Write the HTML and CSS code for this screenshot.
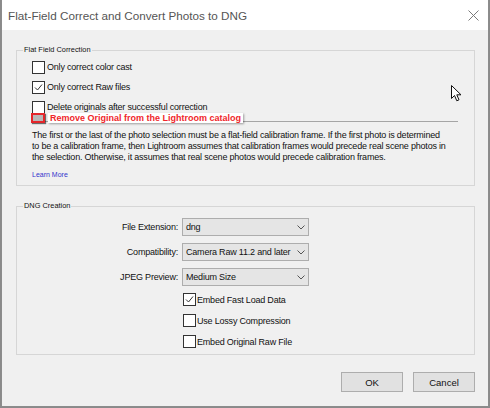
FILE: index.html
```html
<!DOCTYPE html>
<html>
<head>
<meta charset="utf-8">
<link rel="stylesheet" href="styles.css">
</head>
<body>
<div class="window">
  <div class="titlebar">
    <span class="title">Flat-Field Correct and Convert Photos to DNG</span>
    <svg class="close" width="11" height="11" viewBox="0 0 11 11"><path d="M0.5 0.5L10.5 10.5M10.5 0.5L0.5 10.5" stroke="#7a7a7a" stroke-width="1" fill="none"/></svg>
  </div>
  <div class="content">
    <section class="group group-ffc">
      <span class="group-label">Flat Field Correction</span>
      <label class="check"><span class="box"></span>Only correct color cast</label>
      <label class="check"><span class="box"><svg width="11" height="11" viewBox="0 0 11 11"><path d="M2 5.5L4.5 8L9 2.5" stroke="#333" stroke-width="1" fill="none"/></svg></span>Only correct Raw files</label>
      <label class="check"><span class="box"></span>Delete originals after successful correction</label>
      <div class="sep">
        <div class="annot"><span class="annot-box"></span><span class="annot-text">Remove Original from the Lightroom catalog</span></div>
      </div>
      <p class="desc">The first or the last of the photo selection must be a flat-field calibration frame. If the first photo is determined<br>to be a calibration frame, then Lightroom assumes that calibration frames would precede real scene photos in<br>the selection. Otherwise, it assumes that real scene photos would precede calibration frames.</p>
      <a class="learn">Learn More</a>
    </section>
    <section class="group group-dng">
      <span class="group-label">DNG Creation</span>
      <div class="form">
        <span class="form-label">File Extension:</span>
        <div class="select"><span>dng</span><svg width="8" height="5" viewBox="0 0 8 5"><path d="M0.5 0.5L4 4L7.5 0.5" stroke="#555" fill="none"/></svg></div>
        <span class="form-label">Compatibility:</span>
        <div class="select"><span>Camera Raw 11.2 and later</span><svg width="8" height="5" viewBox="0 0 8 5"><path d="M0.5 0.5L4 4L7.5 0.5" stroke="#555" fill="none"/></svg></div>
        <span class="form-label">JPEG Preview:</span>
        <div class="select"><span>Medium Size</span><svg width="8" height="5" viewBox="0 0 8 5"><path d="M0.5 0.5L4 4L7.5 0.5" stroke="#555" fill="none"/></svg></div>
      </div>
      <div class="checks">
        <label class="check check-lg"><span class="box"><svg width="11" height="11" viewBox="0 0 11 11"><path d="M2 5.5L4.5 8L9 2.5" stroke="#333" stroke-width="1" fill="none"/></svg></span>Embed Fast Load Data</label>
        <label class="check check-lg"><span class="box"></span>Use Lossy Compression</label>
        <label class="check check-lg"><span class="box"></span>Embed Original Raw File</label>
      </div>
    </section>
    <div class="buttons">
      <button class="btn">OK</button>
      <button class="btn">Cancel</button>
    </div>
  </div>
  <svg class="cursor" width="11" height="17" viewBox="0 0 11 17"><path d="M0.5 0.5L0.5 13.5L3.5 10.5L5.8 15.8L8 14.8L5.8 9.8L10 9.8Z" fill="#fff" stroke="#111" stroke-width="1" stroke-linejoin="round"/></svg>
</div>
</body>
</html>
```

FILE: styles.css
```css
html, body {
  margin: 0;
  padding: 0;
}
body {
  width: 490px;
  height: 408px;
  background: #8a8a8a;
  font-family: "Liberation Sans", Arial, sans-serif;
  color: #111;
  overflow: hidden;
}
.window {
  position: relative;
  margin-left: 1px;
  width: 486px;
  height: 406px;
  border: 1px solid #8c8c8c;
  border-top: none;
  background: #f0f0f0;
}
.titlebar {
  height: 30px;
  background: #fff;
  display: flex;
  align-items: center;
  justify-content: space-between;
  padding: 0 9px 0 6px;
}
.title {
  font-size: 11.7px;
  color: #555;
}
.close {
  display: block;
}
.content {
  padding: 20px 13px 0 14px;
}
.group {
  position: relative;
  border: 1px solid #d6d6d6;
}
.group-label {
  position: absolute;
  top: -6px;
  left: 6px;
  padding: 0 1px;
  background: #f0f0f0;
  font-size: 7.4px;
  line-height: 10px;
  color: #111;
}
.group-ffc {
  padding: 6px 0 6px 15px;
}
.check {
  display: flex;
  align-items: center;
  height: 20px;
  font-size: 9px;
  letter-spacing: -0.2px;
  white-space: nowrap;
}
.box {
  flex: none;
  width: 11px;
  height: 11px;
  border: 1px solid #333;
  background: #fff;
  margin-right: 2px;
}
.box svg {
  display: block;
}
.sep {
  position: relative;
  margin: 4px 16px 0 0;
  border-top: 1px solid #a5a5a5;
}
.annot {
  position: absolute;
  left: -1px;
  top: -9px;
  display: flex;
  align-items: center;
}
.annot-box {
  width: 10px;
  height: 6px;
  border: 2px solid #e5262b;
  background: #b8b8b8;
  box-shadow: 1px 1px 1px rgba(0, 0, 0, 0.55);
}
.annot-text {
  margin-left: 3px;
  padding: 0 2px;
  height: 10px;
  line-height: 10px;
  background: #fff;
  font-size: 9px;
  font-weight: bold;
  color: #f0262b;
  white-space: nowrap;
  box-shadow: 1px 1px 2px rgba(0, 0, 0, 0.35);
}
.desc {
  margin: 8px 0 0;
  font-size: 9px;
  letter-spacing: -0.2px;
  line-height: 11px;
  white-space: nowrap;
}
.learn {
  display: block;
  margin-top: 7px;
  font-size: 7px;
  line-height: 9px;
  color: #3434cc;
}
.group-dng {
  margin-top: 20px;
  padding: 11px 0 2px 0;
}
.form {
  display: grid;
  grid-template-columns: 161px 127px;
  column-gap: 4px;
  row-gap: 7px;
  align-items: center;
}
.form-label {
  text-align: right;
  font-size: 9px;
  letter-spacing: -0.2px;
  white-space: nowrap;
}
.select {
  box-sizing: border-box;
  height: 18px;
  border: 1px solid #adadad;
  background: #e5e5e5;
  display: flex;
  align-items: center;
  justify-content: space-between;
  padding: 0 3px 0 3px;
  font-size: 9px;
  letter-spacing: -0.2px;
  white-space: nowrap;
}
.select svg {
  display: block;
}
.checks {
  margin: 3px 0 0 166px;
}
.check-lg {
  height: 21px;
}
.check-lg .box {
  margin-right: 1px;
}
.buttons {
  display: flex;
  justify-content: flex-end;
  gap: 10px;
  margin-top: 17px;
}
.btn {
  width: 62px;
  height: 20px;
  margin: 0;
  padding: 0;
  border: 1px solid #adadad;
  background: #e1e1e1;
  font-family: "Liberation Sans", Arial, sans-serif;
  font-size: 9.5px;
  color: #111;
}
.cursor {
  position: absolute;
  left: 449px;
  top: 85px;
}
```
